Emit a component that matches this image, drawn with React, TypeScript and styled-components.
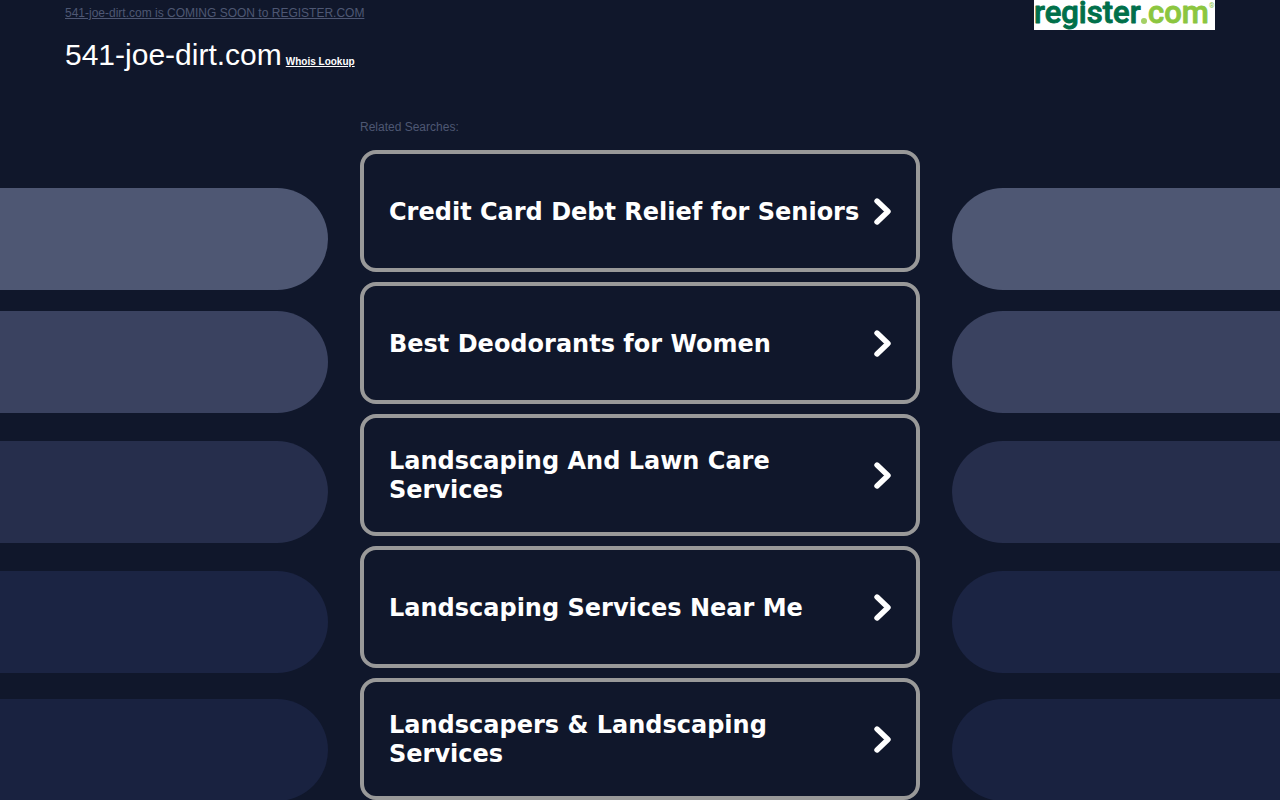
import React from "react";
import styled, { createGlobalStyle } from "styled-components";

const GlobalStyle = createGlobalStyle`
  *, *::before, *::after { box-sizing: border-box; }
  body {
    margin: 0;
    background: #10172b;
    color: #ffffff;
    font-family: Arial, "Liberation Sans", sans-serif;
  }
`;

const Page = styled.div`
  position: relative;
  min-height: 100vh;
`;

const Backdrop = styled.div`
  position: absolute;
  inset: 0;
  display: grid;
  grid-template-columns: 1fr 1fr;
  column-gap: 624px;
  overflow: hidden;
`;

const PillColumn = styled.div`
  display: flex;
  flex-direction: column;
`;

const Pill = styled.div<{ $color: string; $side: "left" | "right"; $space: number }>`
  flex: none;
  height: 102px;
  margin-top: ${(p) => p.$space}px;
  background: ${(p) => p.$color};
  border-radius: ${(p) => (p.$side === "left" ? "0 51px 51px 0" : "51px 0 0 51px")};
`;

const Content = styled.div`
  position: relative;
`;

const Header = styled.header`
  display: flex;
  justify-content: space-between;
  align-items: flex-start;
  max-width: 1150px;
  height: 120px;
  margin: 0 auto;
`;

const Notice = styled.a`
  display: block;
  padding-top: 6px;
  font-size: 12px;
  line-height: 14px;
  color: #4e5773;
`;

const TitleRow = styled.div`
  display: flex;
  align-items: baseline;
  gap: 4px;
  padding-top: 17px;
`;

const Domain = styled.h1`
  margin: 0;
  font-size: 30px;
  line-height: 36px;
  font-weight: 400;
`;

const Whois = styled.a`
  font-size: 10px;
  line-height: 12px;
  font-weight: 700;
  color: #ffffff;
`;

const Logo = styled.svg`
  display: block;
  overflow: visible;
  background: #ffffff;
`;

const Searches = styled.main`
  width: 100%;
  max-width: 560px;
  margin: 0 auto;
`;

const Label = styled.h2`
  margin: 0;
  font-size: 12px;
  line-height: 14px;
  font-weight: 400;
  color: #4e5773;
`;

const List = styled.ul`
  display: flex;
  flex-direction: column;
  gap: 10px;
  margin: 0;
  padding: 16px 0 0;
  list-style: none;
`;

const Card = styled.a`
  display: flex;
  align-items: center;
  justify-content: space-between;
  gap: 8px;
  min-height: 122px;
  padding: 2px 24px 0 25px;
  border: 4px solid #999999;
  border-radius: 16px;
  background: #10172b;
  color: #ffffff;
  font: 700 24px/29px Verdana, "DejaVu Sans", sans-serif;
  text-decoration: none;
`;

const Chevron = styled.svg`
  flex: none;
  display: block;
`;

const pills = [
  { color: "#4e5773", space: 188 },
  { color: "#3a4260", space: 21 },
  { color: "#262e4c", space: 28 },
  { color: "#1b2443", space: 28 },
  { color: "#192240", space: 26 },
];

const searches = [
  "Credit Card Debt Relief for Seniors",
  "Best Deodorants for Women",
  "Landscaping And Lawn Care Services",
  "Landscaping Services Near Me",
  "Landscapers & Landscaping Services",
];

function Pills({ side }: { side: "left" | "right" }) {
  return (
    <PillColumn>
      {pills.map(({ color, space }) => (
        <Pill key={color} $color={color} $side={side} $space={space} />
      ))}
    </PillColumn>
  );
}

function RegisterLogo() {
  return (
    <Logo width="181" height="30" viewBox="0 0 181 30" role="img" aria-label="register.com">
      <g fontFamily="Roboto, sans-serif" fontWeight="500" fontSize="31" strokeLinejoin="round" strokeWidth="0.9">
        <text x="0" y="23" fill="#00704a" stroke="#00704a">register</text>
        <text x="114" y="23" fill="#8cc63f" stroke="#8cc63f">com</text>
      </g>
      <circle cx="110" cy="21" r="3" fill="#a4d065" />
      <text x="175" y="8" fill="#8cc63f" fontFamily="Roboto, sans-serif" fontSize="7">®</text>
    </Logo>
  );
}

export default function App() {
  return (
    <Page>
      <GlobalStyle />
      <Backdrop aria-hidden="true">
        <Pills side="left" />
        <Pills side="right" />
      </Backdrop>
      <Content>
        <Header>
          <div>
            <Notice href="#register">541-joe-dirt.com is COMING SOON to REGISTER.COM</Notice>
            <TitleRow>
              <Domain>541-joe-dirt.com</Domain>
              <Whois href="#whois">Whois Lookup</Whois>
            </TitleRow>
          </div>
          <RegisterLogo />
        </Header>
        <Searches>
          <Label>Related Searches:</Label>
          <List>
            {searches.map((text) => (
              <li key={text}>
                <Card href="#search">
                  <span>{text}</span>
                  <Chevron width="18" height="28" viewBox="0 0 18 28" aria-hidden="true">
                    <path d="M3 3 L14 13.5 L3 24" fill="none" stroke="#fff" strokeWidth="5.4" strokeLinecap="round" strokeLinejoin="round" />
                  </Chevron>
                </Card>
              </li>
            ))}
          </List>
        </Searches>
      </Content>
    </Page>
  );
}
